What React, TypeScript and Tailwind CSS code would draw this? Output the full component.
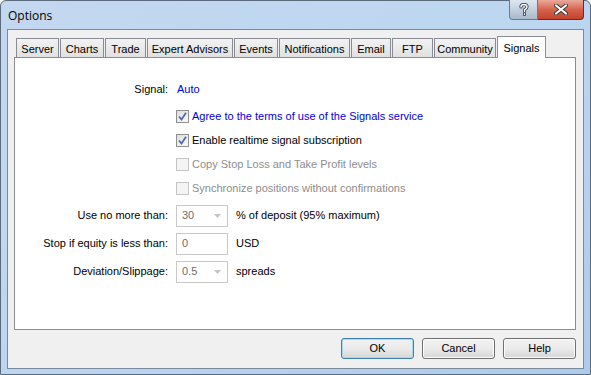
import React from "react";

const font = { fontFamily: '"Liberation Sans", Arial, sans-serif' };

const TABS = [
  { name: "Server", w: "w-[43px]" },
  { name: "Charts", w: "w-[44px]" },
  { name: "Trade", w: "w-[41px]" },
  { name: "Expert Advisors", w: "w-[86px]" },
  { name: "Events", w: "w-[44px]" },
  { name: "Notifications", w: "w-[71px]" },
  { name: "Email", w: "w-[40px]" },
  { name: "FTP", w: "w-[41px]" },
  { name: "Community", w: "w-[62px]" },
];

function Check({ checked, disabled }: { checked?: boolean; disabled?: boolean }) {
  return (
    <span
      className={
        "w-[13px] h-[13px] border flex items-center justify-center shrink-0 " +
        (disabled
          ? "border-[#c5c5c5] bg-[#f4f4f4]"
          : "border-[#8f8f8f] bg-gradient-to-br from-[#dedede] to-[#fbfbfb]")
      }
    >
      {checked && (
        <svg width="9" height="9" viewBox="0 0 9 9">
          <path d="M1 4.5 L3.5 7.5 L8 0.8" fill="none" stroke="#4d6bab" strokeWidth="1.7" />
        </svg>
      )}
    </span>
  );
}

function Combo({ value }: { value: string }) {
  return (
    <div className="w-[52px] h-[22px] border border-[#c9c9c9] bg-white flex items-center pl-[5px] pr-[6px] text-[#6d6d6d]">
      <span className="flex-1">{value}</span>
      <svg width="7" height="4" viewBox="0 0 7 4">
        <path d="M0 0 H7 L3.5 4 Z" fill="#c4c4c4" />
      </svg>
    </div>
  );
}

function Btn({ label, def }: { label: string; def?: boolean }) {
  return (
    <button
      className={
        "w-[73px] h-[21px] rounded-[3px] border text-[11px] text-black bg-gradient-to-b from-[#f2f2f2] via-[#ebebeb] to-[#d6d6d6] " +
        (def ? "border-[#3c7fb1] shadow-[inset_0_0_0_1px_#a8dcf3]" : "border-[#707070] shadow-[inset_0_0_0_1px_#fbfbfb]")
      }
    >
      {label}
    </button>
  );
}

export default function App() {
  return (
    <div className="w-[591px] h-[375px] bg-white text-[11px] text-black" style={font}>
      <div className="w-full h-full rounded-t-[6px] border border-[#5b6b7c] bg-gradient-to-br from-[#c3d8ef] via-[#bcd6f1] to-[#aecbeb] flex flex-col px-[6px] pb-[5px]">
        {/* title bar */}
        <div className="h-[28px] flex items-start relative">
          <span className="text-[12px] mt-[6px] ml-[1px]" style={{ fontFamily: '"Open Sans", "Liberation Sans", sans-serif' }}>
            Options
          </span>
          <div className="ml-auto flex -mt-px">
            <div className="w-[29px] h-[20px] rounded-bl-[4px] border border-[#6c7a8c] border-t-0 bg-gradient-to-b from-[#dde7f1] via-[#c3d0de] to-[#a9b9cc] flex items-center justify-center">
              <svg width="10" height="13" viewBox="0 0 10 13">
                <path d="M2 4 Q2 1.5 5 1.5 Q8 1.5 8 4 Q8 5.5 5.5 6.8 L5.5 8.5 M5.5 11 L5.5 11.4" fill="none" stroke="#3a4250" strokeWidth="3.2" strokeLinecap="round" />
                <path d="M2 4 Q2 1.5 5 1.5 Q8 1.5 8 4 Q8 5.5 5.5 6.8 L5.5 8.5 M5.5 11 L5.5 11.4" fill="none" stroke="#fff" strokeWidth="1.4" strokeLinecap="round" />
              </svg>
            </div>
            <div className="w-[46px] h-[20px] rounded-br-[4px] border border-[#6b2b22] border-t-0 border-l-0 bg-gradient-to-b from-[#e9a99a] via-[#d6634c] to-[#c5412a] flex items-center justify-center">
              <svg width="14" height="11" viewBox="0 0 14 11">
                <path d="M2 1.5 L12 9.5 M12 1.5 L2 9.5" stroke="#3a3a3a" strokeWidth="4" strokeLinecap="round" />
                <path d="M2 1.5 L12 9.5 M12 1.5 L2 9.5" stroke="#fff" strokeWidth="2.2" strokeLinecap="round" />
              </svg>
            </div>
          </div>
        </div>

        {/* client area */}
        <div className="flex-1 border border-[#7b8a9b] bg-[#f0f0f0] flex flex-col pl-[6px] pr-[7px] pb-[9px]">
          {/* tab strip */}
          <div className="flex items-end h-[27px] pl-[2px] relative z-10">
            {TABS.map((t, i) => (
              <div
                key={t.name}
                className={
                  t.w +
                  " shrink-0 whitespace-nowrap h-[19px] border border-[#898c95] border-b-0 bg-gradient-to-b from-[#f2f2f2] to-[#e1e1e1] flex items-center justify-center text-[11px] pt-[2px] " +
                  (i > 0 ? "ml-px" : "")
                }
              >
                {t.name}
              </div>
            ))}
            <div className="w-[49px] shrink-0 ml-px h-[22px] -mb-px border border-[#898c95] border-b-0 bg-white flex items-start justify-center pt-[3px]">
              Signals
            </div>
          </div>

          {/* panel */}
          <div className="h-[273px] border border-[#898c95] bg-white">
            <div className="grid grid-cols-[153px_1fr] gap-x-[9px] mt-[23px] items-center">
              <div className="text-right h-[16px]">Signal:</div>
              <div className="text-[#0000e0]">Auto</div>
            </div>

            <div className="ml-[161px] flex flex-col mt-[7px]">
              <label className="flex items-center gap-[3px] h-[24px]">
                <Check checked />
                <span className="text-[#0000e0]">Agree to the terms of use of the Signals service</span>
              </label>
              <label className="flex items-center gap-[3px] h-[24px]">
                <Check checked />
                <span>Enable realtime signal subscription</span>
              </label>
              <label className="flex items-center gap-[3px] h-[24px]">
                <Check disabled />
                <span className="text-[#8d8d8d]">Copy Stop Loss and Take Profit levels</span>
              </label>
              <label className="flex items-center gap-[3px] h-[24px]">
                <Check disabled />
                <span className="text-[#8d8d8d]">Synchronize positions without confirmations</span>
              </label>
            </div>

            <div className="grid grid-cols-[153px_52px_1fr] gap-x-[8px] gap-y-[6px] items-center mt-[4px]">
              <div className="text-right">Use no more than:</div>
              <Combo value="30" />
              <div>% of deposit (95% maximum)</div>

              <div className="text-right">Stop if equity is less than:</div>
              <div className="w-[52px] h-[22px] border border-[#c9c9c9] bg-white flex items-center pl-[5px] text-[#6d6d6d]">0</div>
              <div>USD</div>

              <div className="text-right">Deviation/Slippage:</div>
              <Combo value="0.5" />
              <div>spreads</div>
            </div>
          </div>

          {/* buttons */}
          <div className="flex justify-end gap-[8px] mt-[8px]">
            <Btn label="OK" def />
            <Btn label="Cancel" />
            <Btn label="Help" />
          </div>
        </div>
      </div>
    </div>
  );
}
